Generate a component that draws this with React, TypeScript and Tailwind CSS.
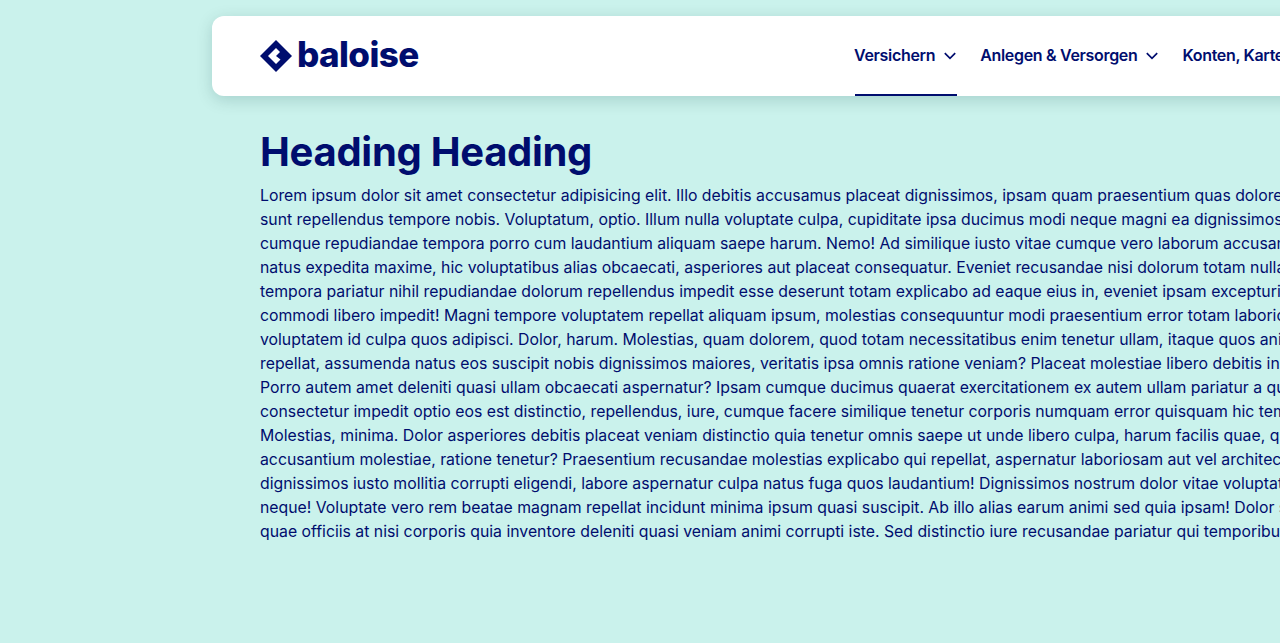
const lines = [
  "Lorem ipsum dolor sit amet consectetur adipisicing elit. Illo debitis accusamus placeat dignissimos, ipsam quam praesentium quas dolore quia",
  "sunt repellendus tempore nobis. Voluptatum, optio. Illum nulla voluptate culpa, cupiditate ipsa ducimus modi neque magni ea dignissimos quo",
  "cumque repudiandae tempora porro cum laudantium aliquam saepe harum. Nemo! Ad similique iusto vitae cumque vero laborum accusantium",
  "natus expedita maxime, hic voluptatibus alias obcaecati, asperiores aut placeat consequatur. Eveniet recusandae nisi dolorum totam nulla quas",
  "tempora pariatur nihil repudiandae dolorum repellendus impedit esse deserunt totam explicabo ad eaque eius in, eveniet ipsam excepturi",
  "commodi libero impedit! Magni tempore voluptatem repellat aliquam ipsum, molestias consequuntur modi praesentium error totam laboriosam",
  "voluptatem id culpa quos adipisci. Dolor, harum. Molestias, quam dolorem, quod totam necessitatibus enim tenetur ullam, itaque quos animi",
  "repellat, assumenda natus eos suscipit nobis dignissimos maiores, veritatis ipsa omnis ratione veniam? Placeat molestiae libero debitis in quas",
  "Porro autem amet deleniti quasi ullam obcaecati aspernatur? Ipsam cumque ducimus quaerat exercitationem ex autem ullam pariatur a quibusdam",
  "consectetur impedit optio eos est distinctio, repellendus, iure, cumque facere similique tenetur corporis numquam error quisquam hic tempore",
  "Molestias, minima. Dolor asperiores debitis placeat veniam distinctio quia tenetur omnis saepe ut unde libero culpa, harum facilis quae, quas",
  "accusantium molestiae, ratione tenetur? Praesentium recusandae molestias explicabo qui repellat, aspernatur laboriosam aut vel architecto",
  "dignissimos iusto mollitia corrupti eligendi, labore aspernatur culpa natus fuga quos laudantium! Dignissimos nostrum dolor vitae voluptate",
  "neque! Voluptate vero rem beatae magnam repellat incidunt minima ipsum quasi suscipit. Ab illo alias earum animi sed quia ipsam! Dolor sit amet",
  "quae officiis at nisi corporis quia inventore deleniti quasi veniam animi corrupti iste. Sed distinctio iure recusandae pariatur qui temporibus",
];

function Chevron() {
  return (
    <svg width="12" height="8" viewBox="0 0 12 8" fill="none" className="shrink-0 mt-px">
      <path d="M0.8 1.2 L6 6.4 L11.2 1.2" stroke="#000d6e" strokeWidth="1.7" />
    </svg>
  );
}

export default function App() {
  return (
    <div className="w-[1280px] h-[643px] overflow-hidden bg-[#caf2ec] pl-[212px] pt-4 text-[#000d6e] font-['Inter',sans-serif]">
      <div className="w-[1200px]">
        <header className="flex h-20 items-center rounded-xl bg-white pl-12 shadow-[0_4px_16px_rgba(0,60,60,0.18)]">
          <a className="flex items-center w-[594px]">
            <svg width="32" height="32" viewBox="0 0 32 32" className="shrink-0">
              <path
                fill="#000d6e"
                fillRule="evenodd"
                d="M16 0 L32 16 L16 32 L0 16 Z M16 8 L8 16 L16 24 L20.5 19.5 L16 16 L20 12 Z"
              />
            </svg>
            <span className="ml-[5px] text-[35px] leading-none font-extrabold tracking-[-0.6px] -mt-1">baloise</span>
          </a>
          <nav className="flex h-20 text-base font-semibold tracking-[-0.32px] whitespace-nowrap">
            <a className="relative flex items-center gap-[9px] mr-6 pb-0.5">
              Versichern
              <Chevron />
              <span className="absolute bottom-0 left-px -right-px h-0.5 bg-[#000d6e]" />
            </a>
            <a className="flex items-center gap-[9px] mr-6 pb-0.5">
              Anlegen &amp; Versorgen
              <Chevron />
            </a>
            <a className="flex items-center gap-[9px] pb-0.5">
              Konten, Karten
              <Chevron />
            </a>
          </nav>
        </header>
        <main className="pl-12">
          <h1 className="mt-[31px] text-[40px] leading-[50px] font-bold tracking-[-0.3px]">Heading Heading</h1>
          <div className="mt-[7px] text-[15.8px] leading-6 whitespace-nowrap">
            {lines.map((line) => (
              <p key={line}>{line}</p>
            ))}
          </div>
        </main>
      </div>
    </div>
  );
}
